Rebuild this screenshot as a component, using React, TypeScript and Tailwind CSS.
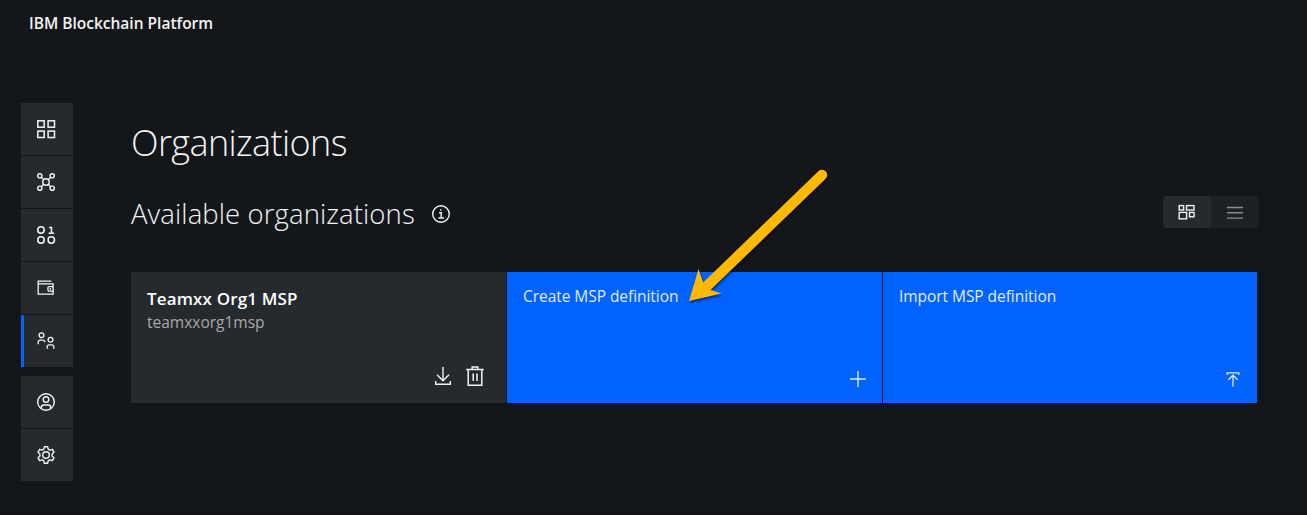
import type { ReactNode } from "react";

type IconProps = { children: ReactNode; className?: string; w?: number; h?: number; sw?: number };

function Icon({ children, className = "", w = 20, h = 20, sw = 1.4 }: IconProps) {
  return (
    <svg width={w} height={h} viewBox={`0 0 ${w} ${h}`} fill="none" stroke="currentColor" strokeWidth={sw} className={className}>
      {children}
    </svg>
  );
}

const nodesIcon = (
  <Icon sw={1.5}>
    <rect x="1.8" y="1.8" width="6.4" height="6.4" />
    <rect x="12.1" y="1.8" width="6.4" height="6.4" />
    <rect x="1.8" y="12.1" width="6.4" height="6.4" />
    <rect x="12.1" y="12.1" width="6.4" height="6.4" />
  </Icon>
);
const channelsIcon = (
  <Icon sw={1.4}>
    <circle cx="10" cy="10" r="3.2" />
    <circle cx="3.8" cy="3.8" r="2.1" />
    <circle cx="16.2" cy="3.8" r="2.1" />
    <circle cx="3.8" cy="16.2" r="2.1" />
    <circle cx="16.2" cy="16.2" r="2.1" />
    <path d="M5.3 5.3l2.4 2.4M14.7 5.3l-2.4 2.4M5.3 14.7l2.4-2.4M14.7 14.7l-2.4-2.4" />
  </Icon>
);
const contractsIcon = (
  <Icon sw={1.5}>
    <circle cx="5" cy="5" r="3.2" />
    <circle cx="5" cy="15" r="3.2" />
    <circle cx="15.3" cy="15" r="3.2" />
    <path d="M13 2.6h2.5v5.4M12.6 8.2h5.6" />
  </Icon>
);
const walletIcon = (
  <Icon sw={1.3}>
    <path d="M2.2 3.2h13.2M2.2 2.6v13.6h14.9V5.8H2.2" />
    <path d="M17.4 8.6h-4.2a1.3 1.3 0 0 0-1.3 1.3v1.9a1.3 1.3 0 0 0 1.3 1.3h4.2" />
    <path d="M14.3 10v1.8" />
  </Icon>
);
const peopleIcon = (
  <Icon sw={1.3}>
    <circle cx="5.5" cy="4.3" r="2.4" />
    <path d="M2.2 13.2v-2a2 2 0 0 1 2-2h2.6a2 2 0 0 1 2 2" />
    <circle cx="14.5" cy="8.8" r="2.4" />
    <path d="M11.2 17.8v-2a2 2 0 0 1 2-2h2.6a2 2 0 0 1 2 2v2" />
  </Icon>
);
const userIcon = (
  <Icon sw={1.4}>
    <circle cx="10" cy="10" r="8.3" />
    <circle cx="10" cy="7.6" r="2.8" />
    <path d="M5.3 16.6v-1.2a2.4 2.4 0 0 1 2.4-2.4h4.6a2.4 2.4 0 0 1 2.4 2.4v1.2" />
  </Icon>
);
const gearIcon = (
  <Icon sw={1.4}>
    <circle cx="10" cy="10" r="3.3" />
    <path
      strokeLinejoin="round"
      d="M8.4 1.7h3.2l.6 2.5 1.7 1 2.4-.9 1.7 2.8-1.9 1.8v2.2l1.9 1.8-1.7 2.8-2.4-.9-1.7 1-.6 2.5H8.4l-.6-2.5-1.7-1-2.4.9L2 12.9l1.9-1.8V8.9L2 7.1l1.7-2.8 2.4.9 1.7-1z"
    />
  </Icon>
);

function NavItem({ icon, active = false }: { icon: ReactNode; active?: boolean }) {
  return (
    <button
      className={`flex h-[52px] w-[52px] items-center justify-center border-l-[3px] bg-[#252a2e] pr-[4.5px] text-[#f3f3f3] ${
        active ? "border-[#0062ff]" : "border-[#252a2e]"
      }`}
    >
      {icon}
    </button>
  );
}

function ActionTile({ label, icon }: { label: string; icon: ReactNode }) {
  return (
    <button className="flex h-[131px] flex-col justify-between bg-[#0062ff] pt-[12px] pr-[15px] pb-[15px] pl-4 text-left text-[#e2ecff]">
      <span className="text-[15.5px] leading-6 tracking-[-0.05px] whitespace-nowrap">{label}</span>
      <span className="self-end">{icon}</span>
    </button>
  );
}

export default function App() {
  return (
    <div className="relative flex h-[515px] w-full flex-col overflow-hidden border-b border-[#170f14] bg-[#13171a] font-['Open_Sans','Noto_Sans',sans-serif] text-[#f3f3f3]">
      <header className="flex h-12 shrink-0 items-center pb-[2px] pl-[29px]">
        <span className="text-[15.5px] leading-6 font-semibold whitespace-nowrap">IBM Blockchain Platform</span>
      </header>

      <div className="flex flex-1">
        <nav className="flex w-[73px] flex-col pt-[55px] pl-[21px]">
          <div className="flex flex-col gap-px">
            <NavItem icon={nodesIcon} />
            <NavItem icon={channelsIcon} />
            <NavItem icon={contractsIcon} />
            <NavItem icon={walletIcon} />
            <NavItem icon={peopleIcon} active />
          </div>
          <div className="mt-[9px] flex flex-col gap-px">
            <NavItem icon={userIcon} />
            <NavItem icon={gearIcon} />
          </div>
        </nav>

        <main className="ml-[58px] flex w-[1128px] flex-col pt-[71px]">
          <h1 className="h-[48px] text-[36px] leading-[48px] font-light tracking-[-0.6px] whitespace-nowrap">Organizations</h1>
          <div className="mt-[25px] flex h-[40px] items-center justify-between">
            <div className="flex items-center gap-[16px]">
              <h2 className="pt-[3px] text-[27.5px] leading-[40px] font-light tracking-[0.1px] whitespace-nowrap">
                Available organizations
              </h2>
              <Icon sw={1.4} className="mt-1">
                <circle cx="10" cy="10" r="8.3" />
                <path d="M8 8.7h2.2v5M7.4 14h5.4" />
                <circle cx="9.8" cy="5.9" r="0.5" fill="currentColor" stroke="currentColor" strokeWidth="0.8" />
              </Icon>
            </div>
            <div className="flex h-8 w-[96px] overflow-hidden rounded-[4px]">
              <button className="flex flex-1 items-center justify-center bg-[#252a2e]">
                <Icon w={18} h={18} sw={1.4}>
                  <rect x="1.2" y="2.6" width="4.4" height="4.4" />
                  <rect x="8.5" y="2.6" width="7.5" height="4.4" />
                  <rect x="1.2" y="9.4" width="7.4" height="6.4" />
                  <rect x="11.5" y="9.4" width="4.5" height="4.4" />
                </Icon>
              </button>
              <button className="flex flex-1 items-center justify-center bg-[#1c2124] text-[#8a8d8f]">
                <Icon w={18} h={18} sw={1.4}>
                  <path d="M1 4.5h16M1 9.8h16M1 15.1h16" />
                </Icon>
              </button>
            </div>
          </div>

          <div className="mt-[40px] grid w-[1126px] grid-cols-[375px_375px_374px] gap-px">
            <article className="flex h-[131px] flex-col justify-between bg-[#252a2e] pt-[15px] pr-[21px] pb-[15px] pl-4">
              <div>
                <h3 className="text-[17px] leading-6 font-semibold tracking-[0.15px] whitespace-nowrap text-white">
                  Teamxx Org1 MSP
                </h3>
                <p className="-mt-px text-[15.5px] leading-6 whitespace-nowrap text-[#aaa7a6]">teamxxorg1msp</p>
              </div>
              <div className="flex justify-end gap-[12px]">
                <Icon w={20} h={24}>
                  <path d="M10 3v13.5M4 10.8l6 6 6-6M2.7 17v3.2h14.6V17" />
                </Icon>
                <Icon w={20} h={24} sw={1.5}>
                  <path d="M1.2 5.4h17.6M7.2 5.400V2.900h5.600V5.400M3.200 5.400v15.800h13.600V5.400M8.200 9.400v7.500M12 9.400v7.500" />
                </Icon>
              </div>
            </article>
            <ActionTile
              label="Create MSP definition"
              icon={
                <Icon w={18} h={18}>
                  <path d="M9 1v16M1 9h16" />
                </Icon>
              }
            />
            <ActionTile
              label="Import MSP definition"
              icon={
                <Icon w={18} h={18} sw={1.3}>
                  <path d="M3.2 5V2.8h11.6V5M9 5.2V16.4M4.4 9.8L9 5.2l4.6 4.6" />
                </Icon>
              }
            />
          </div>
        </main>
      </div>

      <svg
        width="160"
        height="150"
        viewBox="680 160 160 150"
        className="pointer-events-none absolute top-[160px] left-[680px] drop-shadow-[1px_2px_1px_rgba(0,0,0,0.5)]"
      >
        <path d="M822 175L706 287" stroke="#fdb800" strokeWidth="10.5" strokeLinecap="round" />
        <path d="M689 301L698.5 269L703 282L709.5 289.5L721.5 293.5z" fill="#fdb800" />
      </svg>
    </div>
  );
}
